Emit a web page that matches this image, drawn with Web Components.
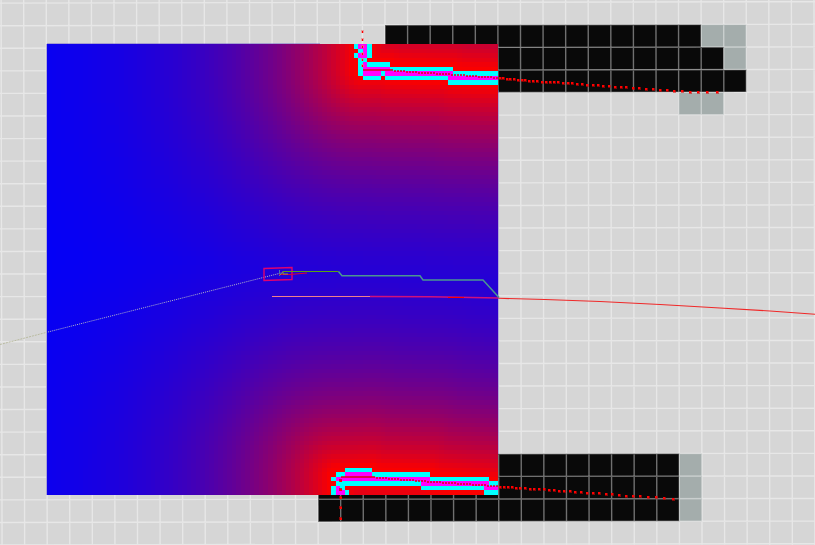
<!DOCTYPE html>
<html lang="en">
<head>
<meta charset="utf-8">
<title>Cost map view</title>
<style>
html, body { margin: 0; min-height: 100%; background: #d6d6d6; }
</style>
</head>
<body>
<map-view>
  <occupancy-grid></occupancy-grid>
  <cost-map></cost-map>
  <path-overlay></path-overlay>
</map-view>
<script>
const VIEW = 'viewBox="0 0 815 545" aria-hidden="true"';
const LAYER = ':host{position:absolute;inset:0;display:block}svg{display:block;width:100%;height:100%}';

// Stacks its slotted layers over one another.
class MapView extends HTMLElement {
  constructor() {
    super();
    this.attachShadow({ mode: 'open' }).innerHTML =
      '<style>:host{display:block;position:relative;width:100%;aspect-ratio:815/545;overflow:hidden;background:#d6d6d6}</style><slot></slot>';
  }
}

// Known cells (black: occupied, grey: uncertain) below the reference lines.
class OccupancyGrid extends HTMLElement {
  constructor() {
    super();
    const cell = 22.58, x0 = 46.3, y0 = 25.6;
    // column, row, columns, rows, colour
    const blocks = [
      [15, 0, 14, 1, '#090909'], [15, 1, 15, 1, '#090909'], [15, 2, 16, 1, '#090909'],
      [29, 0, 2, 1, '#a4adac'], [30, 1, 1, 1, '#a4adac'], [28, 3, 2, 1, '#a4adac'],
      [12, 19, 16, 3, '#090909'], [28, 19, 1, 3, '#a4adac']
    ];
    let out = '';
    for (const [c, r, w, h, fill] of blocks)
      out += `<rect x="${x0 + c * cell}" y="${y0 + r * cell}" width="${w * cell}" height="${h * cell}" fill="${fill}"/>`;
    let d = '';
    for (let i = -3; i < 36; i++) d += `M${x0 + i * cell} -10V560`;
    for (let i = -2; i < 25; i++) d += `M-10 ${y0 + i * cell}H830`;
    this.attachShadow({ mode: 'open' }).innerHTML =
      `<style>${LAYER}</style><svg ${VIEW}><g transform="rotate(-0.1 46 25)">${out}<path d="${d}" fill="none" stroke="#fff" stroke-opacity=".42" stroke-width="1.4"/></g></svg>`;
  }
}

// 100 x 100 cost cells; cost decays with distance from the two walls.
class CostMap extends HTMLElement {
  constructor() {
    super();
    const root = this.attachShadow({ mode: 'open' });
    root.innerHTML = `<style>:host{position:absolute;left:5.767%;top:8.018%;width:55.34%;height:82.8%;display:block}
      canvas{display:block;width:100%;height:100%;image-rendering:pixelated}</style><canvas width="100" height="100"></canvas>`;
    const g = root.querySelector('canvas').getContext('2d');
    const walls = [
      [70, 0, 70, 5.5], [70, 5.5, 76, 5.5], [76, 6, 90, 6.5], [90, 7, 100, 7.5],
      [64.5, 99, 64.5, 96], [64.5, 96, 72, 95.5], [72, 96, 85, 96.5], [85, 97, 100, 98.5]
    ];
    const far = (x, y, [a, b, c, d]) => {
      const u = c - a, v = d - b;
      const k = Math.max(0, Math.min(1, ((x - a) * u + (y - b) * v) / (u * u + v * v)));
      return Math.hypot(x - a - k * u, y - b - k * v);
    };
    for (let y = 0; y < 100; y++) for (let x = 0; x < 100; x++) {
      const dist = Math.min(...walls.map(w => far(x + .5, y + .5, w)));
      const t = Math.min(1, Math.exp(-(dist - 2) / 23.5));
      const s = Math.max(0, (t - .02) / .98);
      g.fillStyle = `rgb(${Math.round(250 * s)},0,${Math.round(250 * (1 - s))})`;
      g.fillRect(x, y, 1, 1);
    }
    // row: [first column, end column, kind]
    const runs = {
      0: [[68, 69, 'c'], [69, 71, 'm'], [71, 72, 'c']],
      1: [[69, 70, 'c'], [70, 71, 'm'], [71, 72, 'c']],
      2: [[68, 69, 'c'], [69, 71, 'm'], [71, 72, 'c']],
      3: [[69, 71, 'c']],
      4: [[69, 70, 'c'], [70, 71, 'm'], [71, 76, 'c']],
      5: [[69, 70, 'c'], [70, 76, 'm'], [76, 90, 'c']],
      6: [[69, 70, 'c'], [70, 74, 'm'], [74, 75, 'c'], [75, 90, 'm'], [90, 100, 'c']],
      7: [[70, 74, 'c'], [75, 89, 'c'], [89, 100, 'm']],
      8: [[89, 100, 'c']],
      94: [[66, 72, 'c']],
      95: [[64, 66, 'c'], [66, 72, 'm'], [72, 85, 'c']],
      96: [[63, 64, 'c'], [64, 85, 'm'], [85, 98, 'c']],
      97: [[64, 83, 'c'], [83, 98, 'm'], [98, 100, 'c']],
      98: [[63, 64, 'c'], [64, 65, 'm'], [65, 66, 'c'], [83, 97, 'c'], [97, 100, 'm']],
      99: [[63, 64, 'c'], [64, 66, 'm'], [66, 67, 'c'], [97, 100, 'c']]
    };
    for (const row in runs) for (const [a, b, kind] of runs[row]) {
      g.fillStyle = kind === 'c' ? '#0ff' : '#f0f';
      g.fillRect(a, +row, b - a, 1);
    }
  }
}

// Scan points, robot footprint and planned paths.
class PathOverlay extends HTMLElement {
  constructor() {
    super();
    const along = (pts, x) => {
      let i = 1;
      while (i < pts.length - 1 && pts[i][0] < x) i++;
      const [a, b] = pts[i - 1], [c, d] = pts[i];
      return b + (d - b) * (x - a) / (c - a);
    };
    const dot = (x, y) => `<path d="M${Math.round(x) - 1} ${Math.round(y) - 1}h3v3h-3z" fill="#e00000" fill-opacity=".55"/><path d="M${Math.round(x) - 1} ${Math.round(y) - 1}h2v2h-2z" fill="#f00"/>`;
    const top = [[363, 70], [386, 70], [410, 72], [450, 74.5], [498, 78], [522, 80], [542, 81.5], [568, 83], [593, 85], [621, 87], [646, 88.5], [667, 90], [690, 91.7], [720, 92.3]];
    const low = [[341, 477], [370, 477], [400, 479.5], [420, 481], [455, 483.5], [480, 485], [500, 486.5], [520, 488], [539, 489], [564, 491], [587, 492.5], [606, 494], [626, 495.5], [648, 496.7], [673, 498.5]];
    const topX = [500, 503, 507, 510, 514, 518, 522, 525, 529, 533, 537, 542, 546, 550, 554, 558, 563, 568, 572, 577, 582, 587, 593, 598, 603, 609, 615, 621, 626, 633, 639, 646, 653, 660, 667, 674, 682, 690, 698, 707, 717];
    const lowX = [500, 504, 508, 512, 516, 520, 525, 530, 534, 539, 544, 549, 554, 559, 564, 570, 575, 581, 587, 593, 599, 606, 612, 619, 626, 633, 640, 648, 656, 664, 673];
    let dots = '';
    for (const x of topX) dots += dot(x, along(top, x));
    for (const x of lowX) dots += dot(x, along(low, x));
    const fine = (x, y) => `<rect x="${Math.round(x)}" y="${Math.round(y)}" width="2" height="2" fill="#e00020" fill-opacity=".8"/>`;
    for (let x = 363; x < 499; x += x < 390 ? 2 : 3) dots += fine(x, along(top, x) - 1);
    for (let x = 341; x < 499; x += x < 372 ? 2 : 3) dots += fine(x, along(low, x) - 1);
    for (const y of [31, 39, 46, 53, 59, 65]) dots += `<rect x="361" y="${y - 1}" width="3" height="3" fill="#e77" fill-opacity=".6"/><rect x="362" y="${y}" width="1" height="2" fill="#f00"/>`;
    for (const y of [480, 489, 497, 507, 518]) dots += `<rect x="339" y="${y - 1}" width="3" height="3" fill="#c00000" fill-opacity=".7"/><rect x="340" y="${y}" width="2" height="2" fill="#f00"/>`;
    this.attachShadow({ mode: 'open' }).innerHTML = `<style>${LAYER}</style><svg ${VIEW} fill="none">
      <path d="M46.5 44V495M47 43.5H320M498.5 90V454" stroke="#6a5ac8" stroke-opacity=".45"/>
      ${dots}
      <path d="M0 344.5L46 332.5" stroke="#b9bba0" stroke-dasharray="2 1"/>
      <path d="M46 332.5L281 273" stroke="#b4b4c8" stroke-dasharray="1 1"/>
      <path d="M272 296.5H385" stroke="#f0808c"/>
      <path d="M370 296.5L430 296.8L499 298" stroke="#d0107c" stroke-width="1.4"/>
      <path d="M448 297.5H464" stroke="#f00"/>
      <path d="M499 298.3L545 299.5L600 301.5L660 304.5L720 308L770 311L815 314.3" stroke="#f02828" stroke-width="1.1"/>
      <path d="M264 268.5L292 267.5V279.5L264 280.5Z" stroke="#e00070" stroke-width="1.4"/>
      <path d="M279.5 270V276" stroke="#4878a8"/>
      <path d="M279 274.5H290L307 273" stroke="#d40040" stroke-width="1.2"/>
      <path d="M280 275L283 271.5V274H288" stroke="#8a9a50"/>
      <path d="M283 271.5H338.5" stroke="#58a410"/>
      <path d="M338.5 271.5L342 275.8H420L423 280H483L499 297.5" stroke="#4b9690" stroke-width="1.5"/>
    </svg>`;
  }
}

customElements.define('occupancy-grid', OccupancyGrid);
customElements.define('cost-map', CostMap);
customElements.define('path-overlay', PathOverlay);
customElements.define('map-view', MapView);
</script>
</body>
</html>
